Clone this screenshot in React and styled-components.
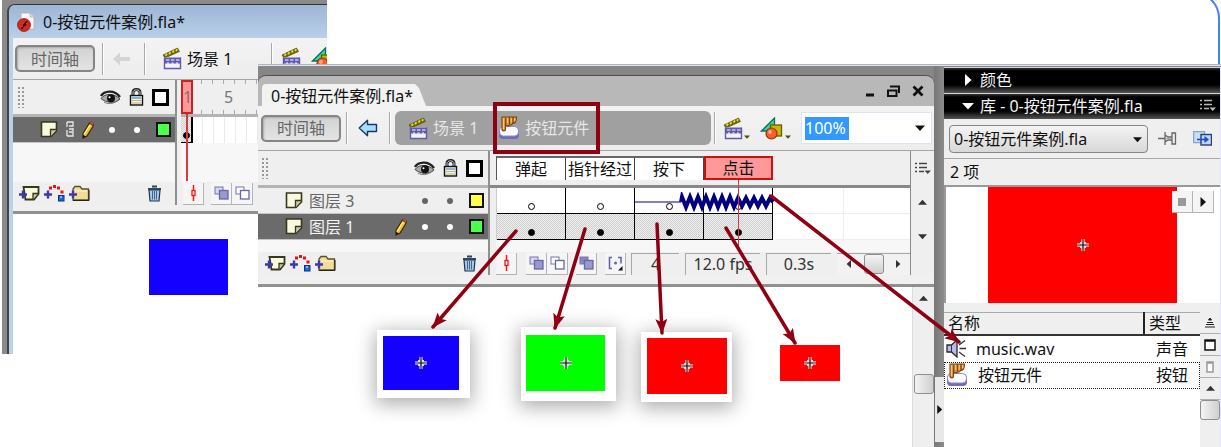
import React from "react";
import styled, { createGlobalStyle, css } from "styled-components";

const Global = createGlobalStyle`
  *, *::before, *::after { box-sizing: border-box; }
  body { margin: 0; background: #fff; }
  body, button, input, select, table {
    font-family: "Noto Sans", "Noto Sans CJK SC", sans-serif;
    font-size: 16px;
    line-height: 20px;
    color: #111;
  }
  button { flex: none; padding: 0; border: 0; background: none; cursor: pointer; }
  svg { display: block; flex: none; }
`;

const wine = "#8f0012";

/* ---------- page ---------- */

const Page = styled.main`
  position: relative;
  min-height: 100vh;
  overflow: hidden;
  background: #fff;
  white-space: nowrap;
`;

const PageOutline = styled.div`
  position: absolute;
  top: -8px;
  right: 1px;
  width: 60px;
  height: 90px;
  border: solid #4a80f5;
  border-width: 2px 2px 0 0;
  border-top-right-radius: 26px;
`;

const BackWindow = styled.section`
  position: absolute;
  top: 0;
  left: 2px;
  width: 325px;
  padding: 4px 0 0 5px;
  background: #8a8a8a;
`;

const BackBody = styled.div`
  border-left: 2px solid #444;
  border-top: 1px solid #333;
  border-top-left-radius: 8px;
  background: #b9d1ea;
  padding-left: 4px;
  overflow: hidden;
`;

const BackTitle = styled.header`
  display: flex;
  align-items: center;
  gap: 8px;
  height: 33px;
  margin-left: -4px;
  padding-left: 8px;
  background: linear-gradient(#9db6d3, #b8d0ea);
`;

const Workspace = styled.section`
  position: relative;
  display: flex;
  min-height: calc(100vh - 64px);
  margin: 64px 0 0 258px;
  border-top: 1px solid #a9b3c9;
  background: #868686;
  box-shadow: inset 0 1px #e4e4e4;
`;

/* ---------- document window ---------- */

const Editor = styled.div`
  display: flex;
  flex: 1;
  min-width: 0;
  flex-direction: column;
  margin-top: 10px;
`;

const TabBar = styled.header`
  display: flex;
  align-items: flex-end;
  justify-content: space-between;
  height: 31px;
  padding: 0 10px 0 4px;
  border-top: 1px solid #505050;
  border-radius: 8px 8px 0 0;
  background: #b8b8b8;
`;

const Tab = styled.h1`
  margin: 0;
  height: 22px;
  width: 164px;
  padding-left: 9px;
  font-size: 16px;
  font-weight: 400;
  line-height: 24px;
  background: #f2f2f2;
  border-top-left-radius: 4px;
  clip-path: polygon(0 0, 153px 0, 157px 4px, 100% 100%, 0 100%);
`;

const WindowButtons = styled.div`
  display: flex;
  gap: 12px;
  align-self: center;
`;

const Toolbar = styled.div`
  display: flex;
  align-items: center;
  height: ${(p) => p.$height}px;
  padding-left: ${(p) => p.$pad}px;
  background: linear-gradient(#f3f3f3, #ededed);
`;

const TimelineButton = styled.button`
  width: 80px;
  height: 27px;
  border: 2px solid #858585;
  border-radius: 5px;
  background: linear-gradient(#d2d2d2, #e4e4e4);
  box-shadow: inset 1px 1px 2px #aaa;
  color: #666;
  line-height: 22px;
`;

const Divider = styled.span`
  flex: none;
  width: 2px;
  height: 32px;
  margin: 0 ${(p) => p.$after}px 0 ${(p) => p.$before}px;
  background: #a8a8a8;
  border-right: 1px solid #fff;
`;

const SceneButton = styled.button`
  display: flex;
  align-items: center;
  gap: 5px;
  color: ${(p) => p.$color || "#111"};
`;

const Crumbs = styled.nav`
  display: flex;
  align-items: center;
  flex: 1;
  height: 34px;
  padding-left: 13px;
  border-radius: 6px;
  background: #a0a0a0;
`;

const Highlighted = styled.div`
  position: relative;
  margin-left: 20px;
  &::after {
    content: "";
    position: absolute;
    inset: -14px -11px -14px -5px;
    border: 4px solid ${wine};
    z-index: 2;
    pointer-events: none;
  }
`;

const MenuButton = styled.button`
  display: flex;
  align-items: flex-end;
  gap: 1px;
  margin-right: 10px;
`;

const ZoomBox = styled.div`
  display: flex;
  align-items: center;
  justify-content: space-between;
  width: 131px;
  height: 32px;
  margin-right: 2px;
  padding: 0 6px 0 3px;
  border: 1px solid #dce4ee;
  background: #fff;
`;

const ZoomInput = styled.input`
  width: 44px;
  height: 23px;
  padding: 0;
  border: 0;
  background: #3399ff;
  color: #fff;
`;

/* ---------- timeline ---------- */

const Timeline = styled.div`
  display: flex;
  border-top: 1px solid #a5a5a5;
  background: #efefef;
`;

const LayersColumn = styled.div`
  width: ${(p) => p.$width}px;
  flex: none;
  border-right: 2px solid #8f8f8f;
`;

const FramesColumn = styled.div`
  position: relative;
  flex: 1;
  min-width: 0;
  padding-left: ${(p) => p.$pad}px;
`;

const ScrollColumn = styled.div`
  display: flex;
  flex-direction: column;
  align-items: center;
  width: 24px;
  flex: none;
  border-left: 1px solid #8a8a8a;
`;

const HeadRow = styled.div`
  display: flex;
  align-items: center;
  height: 34px;
  padding: 0 ${(p) => p.$right || 0}px 0 ${(p) => p.$left || 0}px;
`;

const Ridge = styled.div`
  height: 3px;
  margin-left: ${(p) => p.$bleed || 0}px;
  background: ${(p) => p.$color || "#b4b4b4"};
`;

const Grip = styled.span`
  width: 7px;
  height: 21px;
  margin-right: auto;
  background: radial-gradient(circle at 1px 1px, #999 1px, transparent 1px) 0 0 / 4px 4px;
`;

const HeadIcons = styled.div`
  display: flex;
  align-items: center;
  gap: 8px;
`;

const LayerRow = styled.div`
  display: flex;
  align-items: center;
  height: 26px;
  padding: 0 4px 0 27px;
  border-bottom: 1px solid #c4c4c4;
  background: ${(p) => (p.$selected ? "#6b6b6b" : "#efefef")};
  color: ${(p) => (p.$selected ? "#f4f4f4" : "#666")};
`;

const LayerName = styled.span`
  margin-left: 6px;
`;

const LayerMarks = styled.div`
  display: flex;
  align-items: center;
  margin-left: auto;
`;

const Dot = styled.i`
  width: 6px;
  height: 6px;
  margin-left: ${(p) => p.$gap}px;
  border-radius: 50%;
  background: ${(p) => p.$color};
`;

const Swatch = styled.i`
  width: 15px;
  height: 15px;
  margin-left: 16px;
  border: 2px solid #111;
  background: ${(p) => p.$color};
`;

const Spacer = styled.div`
  height: ${(p) => p.$height}px;
  background: #f7f7f7;
`;

const Footer = styled.div`
  display: flex;
  align-items: center;
  height: 23px;
  gap: ${(p) => p.$gap || 0}px;
  padding: 0 ${(p) => p.$right || 0}px 0 ${(p) => p.$left || 0}px;
`;

const TrashButton = styled.button`
  margin-left: auto;
`;

const TimelineBase = styled.div`
  height: ${(p) => p.$height}px;
  background: #f0f0f0;
  border-bottom: 3px solid #909090;
`;

const FrameLabels = styled.div`
  display: flex;
  height: 24px;
  border-left: 1px solid #555;
  border-top: 2px solid #666;
`;

const hit = css`
  background: #ff9999;
  border: 2px solid #cc1111;
  margin-top: -2px;
  height: 24px;
  line-height: 20px;
`;

const FrameLabel = styled.button`
  width: 69px;
  height: 22px;
  line-height: 22px;
  border-right: 1px solid #444;
  background: #fff;
  ${(p) => p.$active && hit}
`;

const FrameTrack = styled.div`
  display: flex;
  height: 26px;
  border-left: 1px solid #ccc;
  background: linear-gradient(90deg, transparent 346px, #eee 346px, #eee 347px, transparent 347px) #fff;
  border-bottom: 1px solid #eee;
`;

const Frame = styled.span`
  display: flex;
  align-items: flex-end;
  justify-content: center;
  width: 69px;
  height: 26px;
  padding-bottom: 3px;
  border-right: 1px solid #000;
  border-bottom: 1px solid #000;
  background: ${(p) =>
    p.$filled ? "repeating-conic-gradient(#cfcfcf 0% 25%, #efefef 0% 50%) 0 0 / 2px 2px" : "transparent"};
  &::after {
    content: "";
    width: 7px;
    height: 7px;
    border: 1px solid #000;
    border-radius: 50%;
    background: ${(p) => (p.$filled ? "#000" : "#fff")};
  }
`;

const Wave = styled.svg`
  position: absolute;
  left: 145px;
  top: 41px;
`;

const Playhead = styled.i`
  position: absolute;
  left: ${(p) => p.$left}px;
  top: ${(p) => p.$top}px;
  width: ${(p) => p.$width || 2}px;
  height: ${(p) => p.$height}px;
  background: #d9383c;
`;

const ToolButton = styled.button`
  display: grid;
  place-items: center;
  width: 21px;
  height: 22px;
  margin-right: ${(p) => p.$after || 0}px;
  border: solid #b4b4b4;
  border-width: 0 1px 1px 0;
  background: #f5f5f5;
`;

const Readout = styled.output`
  width: ${(p) => p.$width}px;
  height: 22px;
  margin-right: 6px;
  border: solid #a8a8a8;
  border-width: 1px 0 0 1px;
  text-align: center;
  color: #333;
`;

const HScroll = styled.div`
  display: flex;
  flex: 1;
  align-items: center;
  justify-content: space-between;
  height: 22px;
  padding: 0 8px;
  border-top: 1px solid #a8a8a8;
  background: #f2f2f2;
`;

const Thumb = styled.i`
  width: 20px;
  height: 20px;
  border: 1px solid #8e8e8e;
  border-radius: 3px;
  background: linear-gradient(${(p) => p.$angle || "90deg"}, #f4f4f4, #cfcfcf);
`;

const TickScale = styled.div`
  display: flex;
  align-items: center;
  height: 34px;
  color: #777;
  background:
    repeating-linear-gradient(90deg, transparent 0 10px, #aaa 10px 11px) 10px 0 / 100% 4px no-repeat,
    repeating-linear-gradient(90deg, transparent 0 10px, #aaa 10px 11px) 10px 100% / 100% 4px no-repeat;
`;

const CurrentFrame = styled.span`
  width: 12px;
  height: 34px;
  margin-right: 31px;
  border: 2px solid #cc2222;
  background: #ff9999;
  line-height: 30px;
  text-align: center;
`;

const SmallTrack = styled.div`
  display: flex;
  height: 26px;
  background: repeating-linear-gradient(90deg, #fff 0 10px, #eaeaea 10px 11px);
`;

const SmallKey = styled(Frame)`
  width: 12px;
  border-right-width: 2px;
`;

/* ---------- stage ---------- */

const StageRow = styled.div`
  display: flex;
  flex: 1;
  min-height: 160px;
  background: #fff;
`;

const Stage = styled.div`
  position: relative;
  flex: 1;
`;

const StageScroll = styled.div`
  display: flex;
  flex-direction: column;
  align-items: center;
  width: 22px;
  padding-top: 7px;
  gap: 71px;
  background: #efefef;
  border-left: 1px solid #ddd;
`;

const Card = styled.figure`
  position: absolute;
  left: ${(p) => p.$x}px;
  top: ${(p) => p.$y}px;
  margin: 0;
  padding: ${(p) => p.$pad};
  background: #fff;
  box-shadow: ${(p) => (p.$flat ? "none" : "0 4px 18px 2px rgba(0, 0, 0, 0.32)")};
`;

const Shape = styled.div`
  display: grid;
  place-items: center;
  width: ${(p) => p.$w}px;
  height: ${(p) => p.$h}px;
  background: ${(p) => p.$color};
`;

const BackStage = styled.div`
  height: 140px;
  padding: 25px 0 0 136px;
  background: #fff;
`;

/* ---------- library ---------- */

const Gutter = styled.div`
  display: flex;
  flex-direction: column;
  width: 10px;
  padding-top: 311px;
  background: linear-gradient(90deg, #777, #8c8c8c);
  margin-top: 1px;
`;

const CollapseHandle = styled.button`
  display: grid;
  place-items: center;
  width: 9px;
  height: 65px;
  align-self: flex-end;
  background: #e8e8e8;
`;

const Library = styled.aside`
  display: flex;
  flex-direction: column;
  width: 277px;
  margin-top: 2px;
  border-right: 1px solid #dfe8ff;
  background: #efefef;
`;

const PanelTitle = styled.h2`
  display: flex;
  align-items: center;
  gap: 6px;
  height: 26px;
  margin: 0;
  padding: 0 4px 2px 18px;
  border-top: 1px solid #d5d5d5;
  background: linear-gradient(#333 0, #000 3px, #000 17px, #555 100%);
  color: #f5f5f5;
  font-size: 16px;
  font-weight: 400;
  svg:last-child:not(:first-child) { margin-left: auto; }
`;

const LibraryTools = styled.div`
  display: flex;
  align-items: center;
  height: 40px;
  padding: 0 8px 0 5px;
  border-bottom: 1px solid #a8a8a8;
`;

const SelectWrap = styled.div`
  position: relative;
  flex: 1;
  svg { position: absolute; right: 6px; top: 10px; pointer-events: none; }
`;

const DocSelect = styled.select`
  appearance: none;
  width: 100%;
  height: 28px;
  padding: 0 4px;
  border: 1px solid #858585;
  border-radius: 4px;
  background: linear-gradient(#f4f4f4, #d8d8d8);
`;

const IconButton = styled.button`
  margin-left: ${(p) => p.$gap}px;
`;

const Count = styled.p`
  height: 26px;
  margin: 0;
  padding: 0 6px;
  line-height: 26px;
`;

const Preview = styled.div`
  position: relative;
  height: 118px;
  padding-left: 42px;
  border: 1px solid #999;
  border-width: 2px 0 0 2px;
  background: #fff;
`;

const PreviewControls = styled.div`
  position: absolute;
  top: 4px;
  right: 6px;
  display: flex;
`;

const ListArea = styled.div`
  display: flex;
  flex: 1;
  margin-top: 9px;
`;

const ListPane = styled.div`
  flex: 1;
  background: #fff;
`;

const ItemTable = styled.table`
  width: 100%;
  border-collapse: collapse;
  table-layout: fixed;
  th {
    height: 22px;
    padding: 0 4px;
    border-top: 1px solid #aaa;
    border-bottom: 2px solid #333;
    background: #efefef;
    font-weight: 400;
    text-align: left;
  }
  th:last-child { width: 56px; border-left: 2px solid #222; }
  td { height: 27px; padding: 0; }
  td:last-child { padding-left: 12px; }
`;

const ItemRow = styled.tr`
  outline: ${(p) => (p.$selected ? "1px dotted #222" : "none")};
  outline-offset: -1px;
`;

const ItemName = styled.span`
  display: flex;
  align-items: center;
  gap: 10px;
  padding-left: 2px;
`;

const SideColumn = styled.div`
  display: flex;
  flex-direction: column;
  width: 20px;
`;

const SideButton = styled.button`
  display: grid;
  place-items: center;
  height: 22px;
  border-bottom: 1px solid #b0b0b0;
`;

const Annotations = styled.svg`
  position: absolute;
  inset: 0;
  z-index: 3;
  pointer-events: none;
`;

/* ---------- drawings ---------- */

const Caret = ({ dir = "down", size = 9, color = "#111" }) => {
  const turn = { down: 0, left: 90, up: 180, right: 270 }[dir];
  return (
    <svg width={size} height={size} viewBox="0 0 10 10">
      <path d="M0 2.5h10L5 8z" fill={color} transform={`rotate(${turn} 5 5)`} />
    </svg>
  );
};

const FlaIcon = () => (
  <svg width="18" height="20" viewBox="0 0 18 20">
    <path d="M4 1h9l4 4v12H4z" fill="#faf6f4" stroke="#b9aaa8" strokeWidth=".8" />
    <path d="M13 1v4h4" fill="#ddd" stroke="#aaa" strokeWidth=".7" />
    <circle cx="7" cy="13" r="6.5" fill="#d42a22" stroke="#84130e" strokeWidth=".7" />
    <path d="M10.500 9.500C7 9.500 7.500 16.500 4 16.500M6 13h3.500" stroke="#3d0505" strokeWidth="1.500" fill="none" />
  </svg>
);

const Clapper = () => (
  <svg width="20" height="23" viewBox="0 0 20 23">
    <path d="M1 8 15.500 1 17.500 4.500 3 11z" fill="#6f6800" stroke="#5e5600" strokeWidth=".7" strokeLinejoin="round" />
    <path d="m3.500 8.800 1.500-2M7 7.200l1.500-2M10.500 5.500l1.500-2M14 3.900l1.200-1.600" stroke="#e8de3c" strokeWidth="1.800" fill="none" />
    <path d="M2 10.500h16.500v11H2z" fill="#f4f3ff" />
    <path d="M2 10.500h16.500v6H2z" fill="#605aae" />
    <path d="M2.500 10.500v11h16v-11" fill="none" stroke="#605aae" strokeWidth="1.400" />
    <path d="M4 13h3.500M9 13h3.500M14 13h3.500" stroke="#c9c6f3" strokeWidth="1.400" />
    <path d="M5 16h2M9.500 16h2M14 16h2" stroke="#fff" strokeWidth="1" />
  </svg>
);

const BackArrow = ({ pale }) => (
  <svg width="20" height="18" viewBox="0 0 20 18">
    {pale ? (
      <path d="M1 9 8 2.5V7h10v4H8v4.5z" fill="#d4d4d4" />
    ) : (
      <path d="M1.2 9 9.5 1.3v4.2h9v7h-9v4.2z" fill="#a9dcff" stroke="#173a6c" strokeWidth="1.4" strokeLinejoin="round" />
    )}
  </svg>
);

const Shapes = () => (
  <svg width="24" height="23" viewBox="0 0 24 23">
    <path d="M1.5 14 14.5 1v13z" fill="#35d5a5" stroke="#087358" strokeWidth="1.3" />
    <rect x="10.5" y="8" width="11" height="11" fill="#c8b805" stroke="#675e00" strokeWidth="1.3" />
    <circle cx="11.5" cy="16.5" r="5.5" fill="#f5602a" stroke="#97310d" strokeWidth="1.2" />
    <circle cx="10" cy="15" r="2" fill="#ffa47a" />
  </svg>
);

const HandButton = () => (
  <svg width="22" height="24" viewBox="0 0 22 24">
    <rect x="1" y="11.500" width="20" height="11.500" rx="4" fill="#6f6dba" />
    <rect x="1.500" y="10.500" width="19" height="9.500" rx="4" fill="#fbfbff" stroke="#8c8ac9" strokeWidth="1" />
    <path d="M4 1v12.500c0 1.800 3.500 1.800 3.500 0V8.500c1 1.800 3 1.600 3.800.4 1.600.6 3-.2 3.200-1.500C17 7.500 18.500 6 18.500 1z" fill="#dd9339" stroke="#7b430d" strokeWidth="1.100" />
    <path d="M7.800 2v6M11.500 1v7M15 1v6" stroke="#7b430d" strokeWidth="1.200" />
    <path d="M5.500 2v11M9.500 2v5M13.200 2v4.500M16.700 2v3" stroke="#f6c377" strokeWidth="1.200" />
  </svg>
);

const Eye = () => (
  <svg width="21" height="15" viewBox="0 0 21 15">
    <path d="M1 6C4 1 14-1 20 7" stroke="#222" strokeWidth="2.400" fill="none" />
    <path d="M1 8.500C5 3 14 3 20 9 15 14 6 13 1 8.500z" fill="#a9a9a9" stroke="#444" strokeWidth="1" />
    <circle cx="11" cy="8.300" r="4" fill="#111" />
    <circle cx="9.500" cy="7.300" r="1" fill="#fff" />
    <path d="M4 12c4 2.500 9 2 13-1" stroke="#777" fill="none" />
  </svg>
);

const Lock = () => (
  <svg width="15" height="18" viewBox="0 0 15 18">
    <path d="M4 9V4.500C4 .5 11 .5 11 4.500V9" stroke="#222" strokeWidth="3" fill="none" />
    <path d="M4 9V4.500C4 1 11 1 11 4.500V9" stroke="#ddd" strokeWidth=".9" fill="none" />
    <rect x="1.500" y="7.500" width="12" height="9.500" fill="#f1f1e8" stroke="#111" strokeWidth="1.400" />
    <path d="M3 10h9" stroke="#639ae0" strokeWidth="1.400" />
    <path d="M3 12.500h9M3 15h9" stroke="#c0b76a" strokeWidth="1.200" />
  </svg>
);

const Outline = () => (
  <svg width="17" height="17">
    <rect x="1.500" y="1.500" width="14" height="14" fill="#fff" stroke="#000" strokeWidth="3" />
  </svg>
);

const PageIcon = () => (
  <svg width="18" height="17" viewBox="0 0 18 17">
    <path d="M1.500 1h15v9L11 15.500H1.500z" fill="#f9f9df" stroke="#37371d" strokeWidth="1.600" />
    <path d="M16.500 8.500H10.500v7" fill="#c9c99d" stroke="#37371d" strokeWidth="1.300" />
  </svg>
);

const Pencil = () => (
  <svg width="12" height="18" viewBox="0 0 12 18">
    <path d="M7.500 2 11.500 4.500 5 15 1 17l0-4.500z" fill="#f0bd2c" stroke="#3a2806" strokeWidth="1.200" />
    <path d="M7.500 2 9 .5l2.500 2v2z" fill="#d75c5c" stroke="#532" strokeWidth=".6" />
    <path d="m8 4-6 9.500" stroke="#fff09b" strokeWidth="1.300" />
    <path d="m1 17 .2-3.200 2.400 1.800z" fill="#111" />
  </svg>
);

const Ruler = () => (
  <svg width="8" height="17" viewBox="0 0 8 17">
    <path d="M1 1h6v4H3M1 1v5M3 8h4M1 9v6M3 11h4v4H1M7 7v3" stroke="#e8e8e8" strokeWidth="1.300" fill="none" />
  </svg>
);

const Plus = () => <path d="M0 9.500h8M4 5.500v8" stroke="#3b3ba8" strokeWidth="2.400" />;

const AddLayer = () => (
  <svg width="21" height="17" viewBox="0 0 21 17">
    <path d="M4.500 2h15v7L15 14.500H6.500z" fill="#fbfadd" stroke="#37371d" strokeWidth="1.800" />
    <path d="M19 8.500h-5v6" fill="#c9c99d" stroke="#37371d" strokeWidth="1.300" />
    <Plus />
  </svg>
);

const AddGuide = () => (
  <svg width="21" height="17" viewBox="0 0 21 17">
    <path d="M5 3h3M9 1.500h3M13 3h3M16.500 7h3" stroke="#ee1111" strokeWidth="3" />
    <rect x="14.500" y="10.500" width="5.500" height="5.500" fill="#2468d8" stroke="#0b337d" />
    <path d="M16 12h2" stroke="#a4cdff" strokeWidth="1.500" />
    <Plus />
  </svg>
);

const AddFolder = () => (
  <svg width="21" height="17" viewBox="0 0 21 17">
    <path d="M4 4 6 1.500h5L13 4h6.500v11H4z" fill="#f0dd9a" stroke="#5c5022" strokeWidth="1.300" />
    <path d="M6 6h12" stroke="#fff6cf" />
    <path d="M4 15.500h16V5" stroke="#222" fill="none" />
    <Plus />
  </svg>
);

const Trash = () => (
  <svg width="15" height="17" viewBox="0 0 15 17">
    <path d="M2 5h11l-1 11H3z" fill="#a9c9ea" stroke="#1d3550" strokeWidth="1.200" />
    <path d="M1 4h13M5 1.500h5" stroke="#2b4763" strokeWidth="2" />
    <path d="M5.500 6v8.500M7.500 6v8.500M9.500 6v8.500" stroke="#385a7c" strokeWidth=".9" />
  </svg>
);

const CenterFrame = () => (
  <svg width="9" height="18" viewBox="0 0 9 18">
    <path d="M4.500 1v16" stroke="#f11" strokeWidth="1.500" />
    <rect x="3" y="6.500" width="3" height="5" fill="#f5f5f5" stroke="#f11" strokeWidth="1.300" />
  </svg>
);

const Onion = ({ back, front }) => (
  <svg width="15" height="14" viewBox="0 0 15 14">
    <rect x="1" y="1" width="8" height="7" fill={back} stroke="#7575b4" />
    <rect x="5.500" y="4.500" width="8.500" height="8.500" fill={front} stroke="#6666a8" strokeWidth="1.300" />
  </svg>
);

const Markers = () => (
  <svg width="15" height="15" viewBox="0 0 15 15">
    <path d="M4 1.500H1.500v11H4M10 1.500h3v6" stroke="#6666ae" strokeWidth="1.600" fill="none" />
    <circle cx="7.500" cy="7" r="1.500" fill="#6666ae" />
    <path d="M14.500 10v4.500H10z" fill="#111" />
  </svg>
);

const OptionsIcon = ({ color }) => (
  <svg width="17" height="15" viewBox="0 0 17 15">
    <path d="M1 2.500h2M1 6.500h2M1 10.500h2M5 2.500h8M5 6.500h8M5 10.500h5" stroke={color} strokeWidth="1.500" />
    <path d="M10.500 9.500H17L13.700 13z" fill={color} />
  </svg>
);

const Registration = () => (
  <svg width="12" height="12" viewBox="0 0 12 12">
    <path d="M6 0v12M0 6h12" stroke="#fff" strokeWidth="3" />
    <rect x="3" y="3" width="6" height="6" fill="#ddd" />
    <path d="M6 0v12M0 6h12" stroke="#111" strokeWidth="1.200" />
  </svg>
);

const Pin = () => (
  <svg width="19" height="15" viewBox="0 0 19 15">
    <path d="M0 7.500h7M7 1v13M7 4l3 2h4M7 11l3-2h4M14 2v11h3.500V2z" stroke="#666" strokeWidth="1.300" fill="none" />
    <path d="M8 7.500h5" stroke="#aaa" strokeWidth="1.500" />
  </svg>
);

const NewPanel = () => (
  <svg width="19" height="15" viewBox="0 0 19 15">
    <rect x=".7" y=".7" width="11" height="11" fill="#c4e0f2" stroke="#7197b8" />
    <rect x="8" y="3.500" width="10.500" height="10.500" fill="#bcd8f4" stroke="#273f74" strokeWidth="1.400" />
    <path d="M4 8.500h9" stroke="#1c4bd8" strokeWidth="1.600" />
    <path d="M11.500 5 16 8.500 11.500 12z" fill="#1c4bd8" />
  </svg>
);

const Speaker = () => (
  <svg width="20" height="19" viewBox="0 0 20 19">
    <path d="M1 6h4.500L11 1v17l-5.500-5H1z" fill="#b9b9ee" stroke="#292929" strokeWidth="1.300" />
    <path d="M5.500 6v7" stroke="#333" />
    <path d="m13 6 6-4.500M13.500 9.500H20M13 13l6 4.500" stroke="#333" strokeWidth="1.300" />
  </svg>
);

const LayerTools = ({ left, right }) => (
  <Footer $left={left} $right={right} $gap={4}>
    <button aria-label="插入图层"><AddLayer /></button>
    <button aria-label="添加引导层"><AddGuide /></button>
    <button aria-label="插入文件夹"><AddFolder /></button>
    <TrashButton aria-label="删除图层"><Trash /></TrashButton>
  </Footer>
);

const ColumnIcons = () => (
  <HeadIcons>
    <Eye />
    <Lock />
    <Outline />
  </HeadIcons>
);

const wavePath = (() => {
  let d = "M46 10";
  for (let i = 0; i < 23; i++) {
    const x = 47 + i * 4;
    const a = i < 14 ? 5 : 4;
    d += `L${x} ${10 + (i % 2 ? a : -a)}`;
  }
  return d + "L138 10";
})();

const frameLabels = ["弹起", "指针经过", "按下", "点击"];

const arrows = [
  [516, 231, 433, 327],
  [585, 229, 555, 328],
  [657, 224, 662, 333],
  [726, 228, 795, 343],
  [771, 196, 959, 342],
];

const cards = [
  { x: 119, y: 43, pad: "6px 11px 8px 6px", w: 76, h: 54, color: "#1400ff" },
  { x: 263, y: 40, pad: "8px 11px 10px 5px", w: 79, h: 56, color: "#00ff00" },
  { x: 383, y: 45, pad: "6px 5px 8px 6px", w: 80, h: 56, color: "#ff0000" },
  { x: 522, y: 58, pad: "0", w: 60, h: 36, color: "#ff0000", flat: true },
];

/* ---------- composition ---------- */

const BackDocument = () => (
  <BackWindow>
    <BackBody>
      <BackTitle>
        <FlaIcon />
        <span>0-按钮元件案例.fla*</span>
      </BackTitle>
      <Toolbar $height={41} $pad={2}>
        <TimelineButton>时间轴</TimelineButton>
        <Divider $before={7} $after={8} />
        <BackArrow pale />
        <Divider $before={12} $after={16} />
        <SceneButton><Clapper />场景 1</SceneButton>
        <Divider $before={39} $after={8} />
        <MenuButton aria-label="编辑场景"><Clapper /></MenuButton>
        <MenuButton aria-label="编辑元件"><Shapes /></MenuButton>
      </Toolbar>
      <Timeline>
        <LayersColumn $width={164}>
          <HeadRow $left={5} $right={6}><Grip /><ColumnIcons /></HeadRow>
          <Ridge />
          <LayerRow $selected>
            <PageIcon />
            <LayerMarks>
              <Ruler />
              <Dot $gap={2} $color="transparent" />
              <Pencil />
              <Dot $gap={15} $color="#fff" />
              <Dot $gap={19} $color="#fff" />
              <Swatch $color="#4cff4c" />
            </LayerMarks>
          </LayerRow>
          <Spacer $height={39} />
          <LayerTools left={6} right={13} />
        </LayersColumn>
        <FramesColumn $pad={4}>
          <TickScale><CurrentFrame>1</CurrentFrame>5</TickScale>
          <Ridge />
          <SmallTrack><SmallKey $filled /></SmallTrack>
          <Spacer $height={39} />
          <Footer $left={2}>
            <ToolButton $after={7} aria-label="帧居中"><CenterFrame /></ToolButton>
            <ToolButton aria-label="绘图纸外观"><Onion back="#d7d7f1" front="#9999cc" /></ToolButton>
            <ToolButton aria-label="绘图纸轮廓"><Onion back="#fff" front="#fff" /></ToolButton>
          </Footer>
          <Playhead $left={9} $top={34} $height={67} />
        </FramesColumn>
      </Timeline>
      <TimelineBase $height={9} />
      <BackStage><Shape $w={79} $h={56} $color="#1400ff" /></BackStage>
    </BackBody>
  </BackWindow>
);

const EditorWindow = () => (
  <Editor>
    <TabBar>
      <Tab>0-按钮元件案例.fla*</Tab>
      <WindowButtons>
        <button aria-label="最小化">
          <svg width="10" height="12"><path d="M1 10h8" stroke="#111" strokeWidth="3" /></svg>
        </button>
        <button aria-label="还原">
          <svg width="13" height="12" viewBox="0 0 13 12">
            <path d="M3 1.500h9V8M1 5.500h8.500V11H1z" stroke="#111" strokeWidth="2" fill="none" />
          </svg>
        </button>
        <button aria-label="关闭">
          <svg width="12" height="12"><path d="m1.500 1.500 9 9M10.500 1.500l-9 9" stroke="#111" strokeWidth="2.800" /></svg>
        </button>
      </WindowButtons>
    </TabBar>
    <Toolbar $height={44} $pad={3}>
      <TimelineButton>时间轴</TimelineButton>
      <Divider $before={5} $after={10} />
      <button aria-label="返回"><BackArrow /></button>
      <Divider $before={11} $after={4} />
      <Crumbs aria-label="编辑路径">
        <SceneButton $color="#e6e6e6"><Clapper />场景 1</SceneButton>
        <Highlighted>
          <SceneButton $color="#e6e6e6"><HandButton />按钮元件</SceneButton>
        </Highlighted>
      </Crumbs>
      <Divider $before={3} $after={7} />
      <MenuButton aria-label="编辑场景"><Clapper /><Caret size={6} color="#554f00" /></MenuButton>
      <MenuButton aria-label="编辑元件"><Shapes /><Caret size={6} color="#554f00" /></MenuButton>
      <ZoomBox>
        <ZoomInput aria-label="缩放比例" defaultValue="100%" />
        <button aria-label="选择缩放比例"><Caret size={10} /></button>
      </ZoomBox>
    </Toolbar>
    <Timeline>
      <LayersColumn $width={232}>
        <HeadRow $left={4} $right={5}><Grip /><ColumnIcons /></HeadRow>
        <Ridge />
        <LayerRow>
          <PageIcon />
          <LayerName>图层 3</LayerName>
          <LayerMarks>
            <Dot $gap={15} $color="#666" />
            <Dot $gap={19} $color="#666" />
            <Swatch $color="#ffff4c" />
          </LayerMarks>
        </LayerRow>
        <LayerRow $selected>
          <PageIcon />
          <LayerName>图层 1</LayerName>
          <LayerMarks>
            <Pencil />
            <Dot $gap={15} $color="#fff" />
            <Dot $gap={19} $color="#fff" />
            <Swatch $color="#4cff4c" />
          </LayerMarks>
        </LayerRow>
        <Spacer $height={12} />
        <LayerTools left={7} right={11} />
      </LayersColumn>
      <FramesColumn $pad={6}>
        <HeadRow>
          <FrameLabels>
            {frameLabels.map((t, i) => (
              <FrameLabel key={t} $active={i === 3}>{t}</FrameLabel>
            ))}
          </FrameLabels>
        </HeadRow>
        <Ridge $color="#888" $bleed={-6} />
        <FrameTrack>
          {frameLabels.map((t) => <Frame key={t} />)}
        </FrameTrack>
        <FrameTrack>
          {frameLabels.map((t) => <Frame key={t} $filled />)}
        </FrameTrack>
        <Spacer $height={12} />
        <Footer>
          <ToolButton $after={9} aria-label="帧居中"><CenterFrame /></ToolButton>
          <ToolButton aria-label="绘图纸外观"><Onion back="#d7d7f1" front="#9999cc" /></ToolButton>
          <ToolButton $after={8} aria-label="绘图纸轮廓"><Onion back="#fff" front="#fff" /></ToolButton>
          <ToolButton $after={8} aria-label="编辑多个帧"><Onion back="#8888c0" front="#9999cc" /></ToolButton>
          <ToolButton $after={5} aria-label="修改绘图纸标记"><Markers /></ToolButton>
          <Readout $width={48}>4</Readout>
          <Readout $width={75}>12.0 fps</Readout>
          <Readout $width={65}>0.3s</Readout>
          <HScroll>
            <Caret dir="left" size={8} color="#333" />
            <Thumb $angle="180deg" />
            <Caret dir="right" size={8} color="#333" />
          </HScroll>
        </Footer>
        <Wave width="140" height="20" viewBox="0 0 140 20">
          <path d="M0 10h46" stroke="#000080" />
          <path d={wavePath} fill="none" stroke="#000080" strokeWidth="4" />
        </Wave>
        <Playhead $left={248} $top={29} $height={66} $width={1} />
      </FramesColumn>
      <ScrollColumn>
        <HeadRow><OptionsIcon color="#444" /></HeadRow>
        <HeadRow><Caret dir="up" size={9} color="#333" /></HeadRow>
        <HeadRow><Caret size={9} color="#333" /></HeadRow>
      </ScrollColumn>
    </Timeline>
    <TimelineBase $height={12} />
    <StageRow>
      <Stage>
        {cards.map((c) => (
          <Card key={c.x} $x={c.x} $y={c.y} $pad={c.pad} $flat={c.flat}>
            <Shape $w={c.w} $h={c.h} $color={c.color}><Registration /></Shape>
          </Card>
        ))}
      </Stage>
      <StageScroll>
        <Caret dir="up" size={9} color="#333" />
        <Thumb />
      </StageScroll>
    </StageRow>
  </Editor>
);

const LibraryPanel = () => (
  <Library>
    <PanelTitle><Caret dir="right" size={12} color="#fff" />颜色</PanelTitle>
    <PanelTitle>
      <Caret size={12} color="#fff" />
      <span>库 - 0-按钮元件案例.fla</span>
      <OptionsIcon color="#bbb" />
    </PanelTitle>
    <LibraryTools>
      <SelectWrap>
        <DocSelect aria-label="文档"><option>0-按钮元件案例.fla</option></DocSelect>
        <Caret size={9} />
      </SelectWrap>
      <IconButton $gap={10} aria-label="固定当前库"><Pin /></IconButton>
      <IconButton $gap={16} aria-label="新建库面板"><NewPanel /></IconButton>
    </LibraryTools>
    <Count>2 项</Count>
    <Preview>
      <Shape $w={189} $h={116} $color="#ff0000"><Registration /></Shape>
      <PreviewControls>
        <ToolButton aria-label="停止">
          <svg width="8" height="8"><rect width="8" height="8" fill="#999" /></svg>
        </ToolButton>
        <ToolButton aria-label="播放"><Caret dir="right" size={10} /></ToolButton>
      </PreviewControls>
    </Preview>
    <ListArea>
      <ListPane>
        <ItemTable>
          <thead>
            <tr><th>名称</th><th>类型</th></tr>
          </thead>
          <tbody>
            <ItemRow>
              <td><ItemName><Speaker />music.wav</ItemName></td>
              <td>声音</td>
            </ItemRow>
            <ItemRow $selected>
              <td><ItemName><HandButton />按钮元件</ItemName></td>
              <td>按钮</td>
            </ItemRow>
          </tbody>
        </ItemTable>
      </ListPane>
      <SideColumn>
        <SideButton aria-label="切换排序顺序">
          <svg width="10" height="11"><path d="M5 1 6.500 3h-3zM2 5.500h6M1 7.500h8M0 10h10" fill="#222" stroke="#222" /></svg>
        </SideButton>
        <SideButton aria-label="宽库视图">
          <svg width="12" height="12"><path d="M1 1h10v10H1zM1 2h10" fill="#fff" stroke="#111" strokeWidth="1.500" /></svg>
        </SideButton>
        <SideButton aria-label="窄库视图">
          <svg width="8" height="12"><path d="M1 1h6v10H1zM1 2h6" fill="#fff" stroke="#999" strokeWidth="1.500" /></svg>
        </SideButton>
        <SideButton aria-label="向上滚动"><Caret dir="up" size={9} color="#333" /></SideButton>
        <Thumb />
      </SideColumn>
    </ListArea>
  </Library>
);

export default function App() {
  return (
    <Page>
      <Global />
      <PageOutline />
      <BackDocument />
      <Workspace>
        <EditorWindow />
        <Gutter>
          <CollapseHandle aria-label="折叠面板"><Caret dir="right" size={9} /></CollapseHandle>
        </Gutter>
        <LibraryPanel />
      </Workspace>
      <Annotations width="1221" height="447" aria-hidden="true">
        <defs>
          <marker id="head" markerUnits="userSpaceOnUse" markerWidth="16" markerHeight="14" refX="14" refY="6" orient="auto">
            <path d="M0 0 15 6 0 12 3 6z" fill={wine} />
          </marker>
        </defs>
        {arrows.map(([x1, y1, x2, y2]) => (
          <path
            key={x1}
            d={`M${x1} ${y1}L${x2} ${y2}`}
            stroke={wine}
            strokeWidth="3.500"
            strokeLinecap="round"
            markerEnd="url(#head)"
          />
        ))}
      </Annotations>
    </Page>
  );
}
